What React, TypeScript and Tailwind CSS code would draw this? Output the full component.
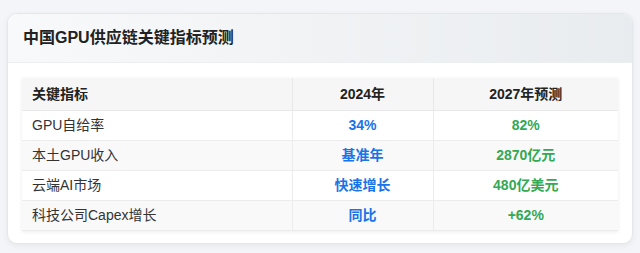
import React from "react";

const rows = [
  { name: "GPU自给率", y2024: "34%", y2027: "82%" },
  { name: "本土GPU收入", y2024: "基准年", y2027: "2870亿元" },
  { name: "云端AI市场", y2024: "快速增长", y2027: "480亿美元" },
  { name: "科技公司Capex增长", y2024: "同比", y2027: "+62%" },
];

export default function App() {
  return (
    <div
      className="w-[640px] h-[253px] bg-[#f3f5f8] pt-[13px] overflow-hidden"
      style={{ fontFamily: '"Liberation Sans", "Noto Sans CJK SC", sans-serif' }}
    >
      <div className="mx-[7px] w-[626px] bg-white border border-[#e3e7ec] rounded-[10px] shadow-[0_2px_6px_rgba(0,0,0,0.06)] overflow-hidden">
        <div className="bg-gradient-to-r from-[#f8f9fa] to-[#e9ecef] border-b border-[#eceff2] px-[15px] py-[12px]">
          <h2 className="text-[16px] leading-6 font-bold text-[#222]">中国GPU供应链关键指标预测</h2>
        </div>
        <div className="px-[14px] pt-[15px] pb-[12px]">
          <div className="shadow-[0_1px_4px_rgba(0,0,0,0.08)]">
            <table className="w-full border-collapse text-[14px] text-[#333]">
              <thead>
                <tr className="bg-[#f6f6f6]">
                  <th className="w-[270px] text-left font-bold text-[#222] px-[10px] py-[6px] leading-5 border-b border-r border-[#e8e8e8]">关键指标</th>
                  <th className="w-[141px] text-center font-bold text-[#222] px-[10px] py-[6px] leading-5 border-b border-r border-[#e8e8e8]">2024年</th>
                  <th className="text-center font-bold text-[#222] px-[10px] py-[6px] leading-5 border-b border-[#e8e8e8]">2027年预测</th>
                </tr>
              </thead>
              <tbody>
                {rows.map((r, i) => (
                  <tr key={r.name} className={i % 2 === 1 ? "bg-[#f9f9f9]" : "bg-white"}>
                    <td className="h-[30px] px-[10px] py-0 leading-[19px] border-b border-r border-[#ececec]">{r.name}</td>
                    <td className="h-[30px] px-[10px] py-0 leading-[19px] text-center font-bold text-[#1a73e8] border-b border-r border-[#ececec]">{r.y2024}</td>
                    <td className="h-[30px] px-[10px] py-0 leading-[19px] text-center font-bold text-[#34a853] border-b border-[#ececec]">{r.y2027}</td>
                  </tr>
                ))}
              </tbody>
            </table>
          </div>
        </div>
      </div>
    </div>
  );
}
